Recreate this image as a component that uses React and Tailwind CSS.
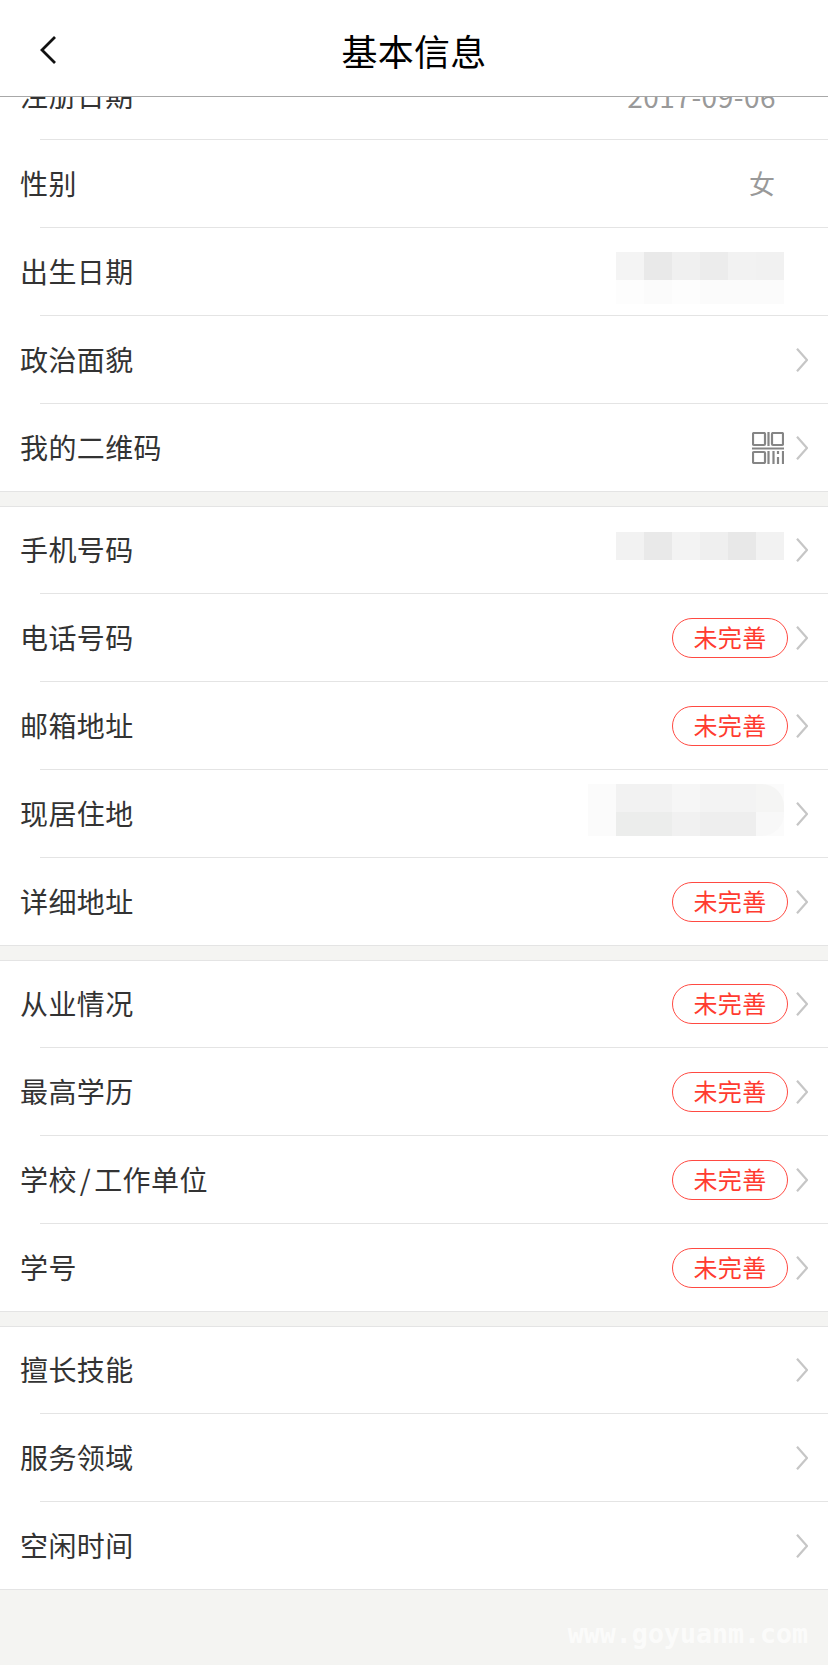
import React from 'react';

const dobCells = [
  ['bg-[#f4f4f4]', 'bg-[#e9e9e9]', 'bg-[#f0f0f0]', 'bg-[#ececec]', 'bg-[#f2f2f2]', 'bg-[#f1f1f1]'],
  ['bg-[#fdfdfd]', 'bg-[#fbfbfb]', 'bg-[#fdfdfd]', 'bg-[#fbfbfb]', 'bg-[#fbfbfb]', 'bg-[#fbfbfb]'],
];
const phoneCells = [['bg-[#f2f2f2]', 'bg-[#e9e9e9]', 'bg-[#f3f3f3]', 'bg-[#efefef]', 'bg-[#e8e8e8]', 'bg-[#f2f2f2]']];
const addressCells = [
  ['bg-[#f2f2f2]', 'bg-[#f2f2f2]', 'bg-[#f6f6f6]', 'bg-[#f3f3f3]', 'bg-[#f3f3f3]', 'bg-[#f5f5f4] rounded-tr-[22px]'],
  ['bg-[#ecedec]', 'bg-[#ecedec]', 'bg-[#f1f1f1]', 'bg-[#eeeeee]', 'bg-[#eeeeee]', 'bg-[#f8f8f8] rounded-br-[22px]'],
];

const Chevron = () => (
  <svg width="12" height="24" viewBox="0 0 12 24" fill="none" className="block">
    <path d="M1 .7L11 12 1 23.3" stroke="#c6c6c6" strokeWidth="2.2" />
  </svg>
);

const QrIcon = () => (
  <svg width="32" height="32" viewBox="0 0 32 32" fill="none" stroke="#858585" strokeWidth="2.2" className="block">
    <rect x="1" y="1" width="12" height="12" rx="1" />
    <rect x="20" y="1" width="11" height="12" rx="1" />
    <path d="M16.5 0v14M0 16.5h32" />
    <rect x="1" y="20" width="12" height="11" rx="1" />
    <path d="M16.5 19v13M21.5 19v13M26 19v3M26 25v7M31 19v13" />
  </svg>
);

const Mosaic = ({ rows, halo, className = '' }) => (
  <div className={`flex ${halo ? 'bg-[#fbfbfb] pl-7' : ''} ${className}`}>
    <div>
      {rows.map((cells, i) => (
        <div key={i} className={i === 1 ? 'flex h-6' : 'flex h-7'}>
          {cells.map((c, j) => (
            <div key={j} className={`w-7 ${c}`} />
          ))}
        </div>
      ))}
    </div>
  </div>
);

const Badge = () => (
  <span className="-mr-1 flex h-10 w-[116px] items-center justify-center rounded-full border border-[#ff4a42] pb-0.5 text-2xl tracking-[0.3px] text-[#ff3b30]">
    未完善
  </span>
);

const Row = ({ label, first, arrow = true, children }) => (
  <div className={`flex items-center pl-5 pr-5 ${first ? 'h-[86px]' : 'h-[87px]'}`}>
    <span className="pb-0.5 text-[28px] leading-none tracking-[0.4px] text-[#333]">{label}</span>
    <div className="ml-auto flex items-center">{children}</div>
    <div className="ml-3 w-3">{arrow && <Chevron />}</div>
  </div>
);

const Section = ({ children, top }) => {
  const rows = React.Children.toArray(children);
  return (
    <section className={`bg-white ${top ? '' : 'border-t border-[#e4e4e4]'} border-b border-[#e4e4e4]`}>
      {rows.map((row, i) => (
        <div key={i}>
          {i > 0 && <div className="ml-10 h-px bg-[#e4e4e4]" />}
          {row}
        </div>
      ))}
    </section>
  );
};

export default function App() {
  return (
    <div className="flex h-[1665px] w-[828px] flex-col overflow-hidden bg-[#f4f4f2] font-['Noto_Sans_CJK_SC','Noto_Sans',sans-serif]">
      <header className="z-10 flex h-[97px] shrink-0 items-center justify-center border-b border-[#a8a8a8] bg-white pt-1">
        <div className="flex w-full items-center px-10">
          <svg width="16" height="28" viewBox="0 0 16 28" fill="none" className="block">
            <path d="M15 1L2 14l13 13" stroke="#111" strokeWidth="2.8" />
          </svg>
          <h1 className="mr-4 flex-1 text-center text-4xl leading-none tracking-[0.3px] text-black">基本信息</h1>
        </div>
      </header>

      <main className="-mt-[45px] flex flex-col gap-[14px]">
        <Section top>
          <Row label="注册日期" arrow={false}>
            <span className="mr-2 text-[28px] leading-none tracking-[0.5px] text-[#999]">2017-09-06</span>
          </Row>
          <Row label="性别" arrow={false}>
            <span className="mr-[9px] pb-0.5 text-[26px] leading-none text-[#999]">女</span>
          </Row>
          <Row label="出生日期" arrow={false}><Mosaic rows={dobCells} className="mt-3" /></Row>
          <Row label="政治面貌" />
          <Row label="我的二维码"><QrIcon /></Row>
        </Section>

        <Section>
          <Row first label="手机号码"><Mosaic rows={phoneCells} className="mb-2" /></Row>
          <Row label="电话号码"><Badge /></Row>
          <Row label="邮箱地址"><Badge /></Row>
          <Row label="现居住地"><Mosaic rows={addressCells} halo className="mb-2" /></Row>
          <Row label="详细地址"><Badge /></Row>
        </Section>

        <Section>
          <Row first label="从业情况"><Badge /></Row>
          <Row label="最高学历"><Badge /></Row>
          <Row label={<>学校<span className="mx-[3px]">/</span>工作单位</>}><Badge /></Row>
          <Row label="学号"><Badge /></Row>
        </Section>

        <Section>
          <Row first label="擅长技能" />
          <Row label="服务领域" />
          <Row label="空闲时间" />
        </Section>
      </main>

      <footer className="mt-auto flex justify-end pb-[17px] pr-5">
        <span className="font-['DejaVu_Sans_Mono',monospace] text-[26.6px] font-bold leading-none text-white/70">
          www.goyuanm.com
        </span>
      </footer>
    </div>
  );
}
